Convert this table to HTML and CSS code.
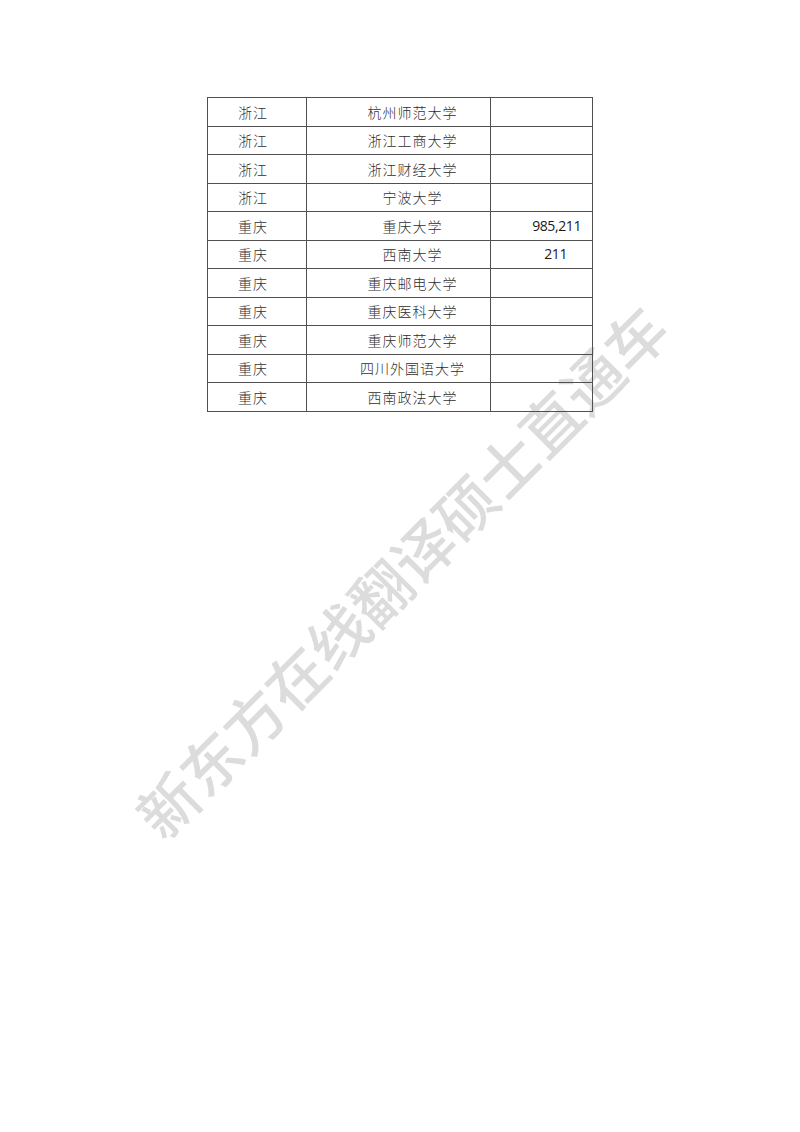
FILE: index.html
```html
<!DOCTYPE html>
<html lang="zh-CN">
<head>
<meta charset="utf-8">
<link rel="stylesheet" href="styles.css">
</head>
<body>
<div class="page">
  <div class="watermark">新东方在线翻译硕士直通车</div>
  <table class="schools">
    <colgroup><col class="c1"><col class="c2"><col class="c3"></colgroup>
    <tr><td class="prov">浙江</td><td class="name">杭州师范大学</td><td></td></tr>
    <tr><td class="prov">浙江</td><td class="name">浙江工商大学</td><td></td></tr>
    <tr><td class="prov">浙江</td><td class="name">浙江财经大学</td><td></td></tr>
    <tr><td class="prov">浙江</td><td class="name">宁波大学</td><td></td></tr>
    <tr><td class="prov">重庆</td><td class="name">重庆大学</td><td class="num">985,211</td></tr>
    <tr><td class="prov">重庆</td><td class="name">西南大学</td><td class="num num-short">211</td></tr>
    <tr><td class="prov">重庆</td><td class="name">重庆邮电大学</td><td></td></tr>
    <tr><td class="prov">重庆</td><td class="name">重庆医科大学</td><td></td></tr>
    <tr><td class="prov">重庆</td><td class="name">重庆师范大学</td><td></td></tr>
    <tr><td class="prov">重庆</td><td class="name">四川外国语大学</td><td></td></tr>
    <tr><td class="prov">重庆</td><td class="name">西南政法大学</td><td></td></tr>
  </table>
</div>
</body>
</html>
```

FILE: styles.css
```css
html, body {
  margin: 0;
  padding: 0;
  background: #ffffff;
}

.page {
  position: relative;
  width: 800px;
  height: 1132px;
  overflow: hidden;
  padding-top: 97px;
  box-sizing: border-box;
}

.watermark {
  position: absolute;
  left: 400px;
  top: 570px;
  transform: translate(-50%, -50%) rotate(-45deg);
  white-space: nowrap;
  font-family: "Noto Sans CJK SC", sans-serif;
  font-weight: 500;
  font-size: 60px;
  line-height: 1;
  color: #dcdcdc;
  z-index: 0;
}

.schools {
  position: relative;
  z-index: 1;
  margin-left: 207px;
  width: 385px;
  border-collapse: collapse;
  table-layout: fixed;
  font-family: "Noto Sans CJK SC", sans-serif;
  font-weight: 300;
  font-size: 14px;
  letter-spacing: 1px;
  color: #2e2e2e;
}

.c1 { width: 99px; }
.c2 { width: 184px; }
.c3 { width: 102px; }

.schools td {
  border: 1px solid #505050;
  height: 27.5px;
  padding: 0;
  text-align: center;
  vertical-align: middle;
  line-height: 1;
}

.schools td.prov {
  padding-right: 8px;
}

.schools td.name {
  padding-left: 28px;
}

.schools td.num {
  text-align: right;
  padding-right: 11px;
  font-family: "Open Sans", sans-serif;
  font-weight: 400;
  font-size: 14px;
  letter-spacing: -0.4px;
  color: #1a1a1a;
}

.schools td.num-short {
  padding-right: 25px;
}
```
